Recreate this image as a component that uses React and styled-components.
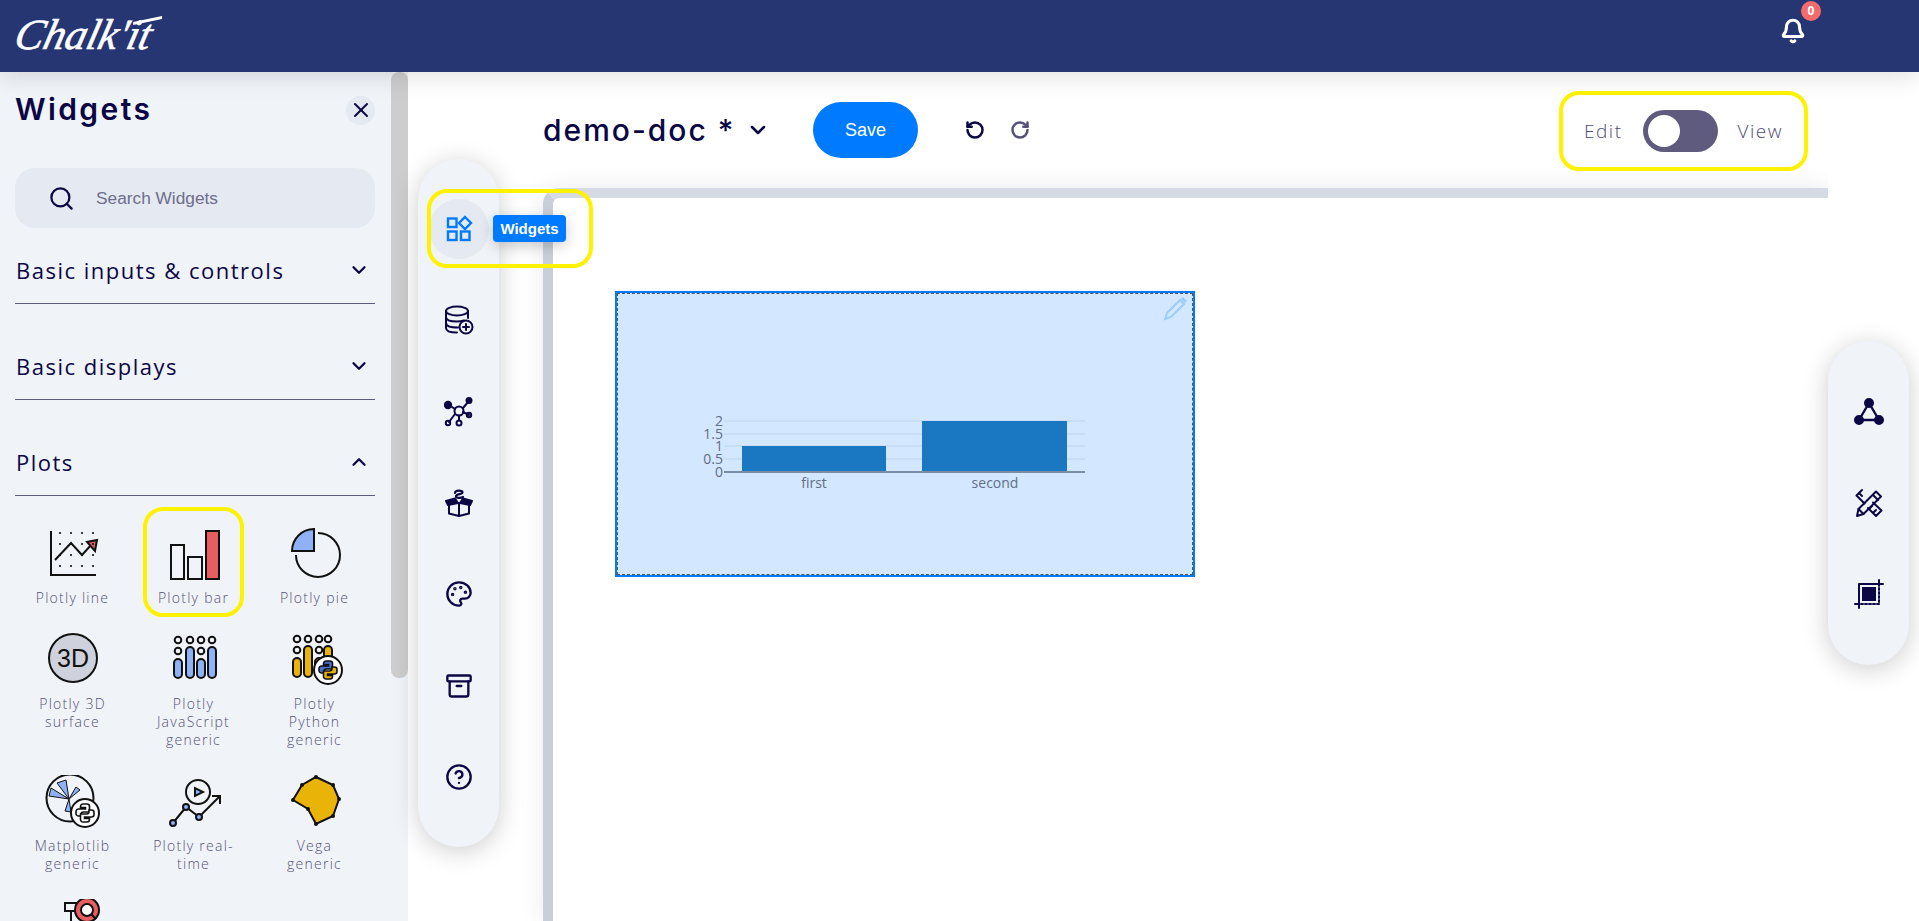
import styled, { createGlobalStyle } from 'styled-components';
import { Archive, Bell, ChevronDown, ChevronUp, CircleHelp, Palette, RotateCcw, RotateCw, Search, X } from 'lucide-react';

const INK = '#0b0745';
const BLUE = '#007bff';
const SOFT_BLUE = '#8fb1f5';
const GOLD = '#eab308';
const RED = '#e85d60';

const PythonMark = ({ x, y, top, bottom, scale = 1 }) => (
  <g transform={`translate(${x} ${y}) scale(${scale})`} stroke="#111" strokeWidth="1.6">
    <path fill={top} d="M-2 -9h4a2.500 2.500 0 0 1 2.500 2.500V-1h-6a2.500 2.500 0 0 0-2.500 2.500V3H-6.500A2.500 2.500 0 0 1-9 .5v-2A2.500 2.500 0 0 1-6.500-4H.5V-5.500h-5V-6.500A2.500 2.500 0 0 1-2-9z" />
    <path fill={bottom} d="M2 9h-4a2.500 2.500 0 0 1-2.500-2.500V1h6a2.500 2.500 0 0 0 2.500-2.500V-3H6.500A2.500 2.500 0 0 1 9-.5v2A2.500 2.500 0 0 1 6.500 4H-.5V5.500h5V6.500A2.500 2.500 0 0 1 2 9z" />
  </g>
);

const TileSvg = ({ children }) => (
  <svg width="60" height="62" viewBox="0 0 60 62" fill="none" stroke="#111" strokeWidth="2">
    {children}
  </svg>
);

const PlotlyLine = () => (
  <TileSvg>
    <path d="M8 4V48H53" />
    <path d="M12 33L28 16L39 28L49 17" />
    <path d="M54 13L44 15L52 24Z" fill={RED} />
    {[6, 17, 28, 39].map((y) =>
      [17, 28, 39, 50].map((x) => <circle key={`${x}-${y}`} cx={x} cy={y} r="1.100" fill="#111" stroke="none" />),
    )}
  </TileSvg>
);

const PlotlyBar = () => (
  <TileSvg>
    <rect x="7" y="18" width="13" height="34" />
    <rect x="24" y="30" width="14" height="22" />
    <rect x="42" y="4" width="13" height="48" fill={RED} />
  </TileSvg>
);

const PlotlyPie = () => (
  <TileSvg>
    <path d="M33 6A22 22 0 1 1 11 28" />
    <path d="M29 2V24H7A22 22 0 0 1 29 2Z" fill={SOFT_BLUE} />
  </TileSvg>
);

const Plotly3D = () => (
  <TileSvg>
    <circle cx="30" cy="25" r="24" fill="#cfd2dc" />
    <text x="30" y="34" textAnchor="middle" fontFamily="Liberation Sans, sans-serif" fontSize="25" fill="#111" stroke="none">3D</text>
  </TileSvg>
);

const DotBars = ({ fill, xs, offset }) => (
  <>
    {xs.map((x, i) => (
      <g key={x}>
        <circle cx={x} cy={7 - offset} r="3.300" />
        {i % 2 === 0 && <circle cx={x} cy={18 - offset} r="3.300" />}
        <rect
          x={x - 4}
          y={(i % 2 === 0 ? 26 : 14) - offset}
          width="8"
          height={i % 2 === 0 ? 19 : 31}
          rx="4"
          fill={fill}
        />
      </g>
    ))}
  </>
);

const PlotlyJs = () => (
  <TileSvg>
    <DotBars fill={SOFT_BLUE} xs={[14, 26, 37, 48]} offset={0} />
  </TileSvg>
);

const PlotlyPython = () => (
  <TileSvg>
    <DotBars fill={GOLD} xs={[12, 23, 34, 43]} offset={1} />
    <circle cx="43" cy="37" r="14" fill="#fff" />
    <PythonMark x={43} y={37} top="#4b6fd0" bottom={GOLD} />
  </TileSvg>
);

const Matplotlib = () => (
  <TileSvg>
    <circle cx="27" cy="23" r="23.500" />
    <g fill={SOFT_BLUE} strokeWidth="1">
      <path d="M26 24L14 8L23 5Z" />
      <path d="M26 24L6 21L8 13Z" />
      <path d="M26 24L33 12L37 15Z" />
      <path d="M26 24L22 36L28 37Z" />
    </g>
    <circle cx="42" cy="38" r="14" fill="#fff" />
    <PythonMark x={42} y={38} top="#fff" bottom="#fff" />
  </TileSvg>
);

const PlotlyRealtime = () => (
  <TileSvg>
    <circle cx="34" cy="17" r="12" />
    <path d="M31 13V21L39 17Z" fill={SOFT_BLUE} />
    <path d="M9 48L22 32L35 42L56 21M48 21H56V29" />
    {[[9, 48], [22, 32], [35, 42]].map(([x, y]) => (
      <circle key={x} cx={x} cy={y} r="3" fill={SOFT_BLUE} />
    ))}
  </TileSvg>
);

const VEGA_POINTS = [[31, 2], [48, 10], [54, 24], [48, 41], [31, 49], [23, 34], [8, 25], [17, 10]];

const Vega = () => (
  <TileSvg>
    <polygon points={VEGA_POINTS.map((p) => p.join(',')).join(' ')} fill={GOLD} />
    {VEGA_POINTS.map(([x, y]) => (
      <circle key={x + y} cx={x} cy={y} r="2" fill="#111" stroke="none" />
    ))}
  </TileSvg>
);

const Inspector = () => (
  <TileSvg>
    <path d="M34 4H22V12H34M28 12V30" />
    <circle cx="44" cy="11" r="12" fill={RED} />
    <circle cx="44" cy="11" r="6" fill="#fff" />
    <path d="M48 15L53 20" />
  </TileSvg>
);

const RailSvg = ({ children, color = INK, size = 30 }) => (
  <svg width={size} height={size} viewBox="0 0 30 30" fill="none" stroke={color} strokeWidth="2" strokeLinecap="round" strokeLinejoin="round">
    {children}
  </svg>
);

const WidgetsIcon = () => (
  <RailSvg color={BLUE}>
    <g strokeLinecap="butt" strokeLinejoin="miter" strokeWidth="2.400">
      <rect x="4" y="4.500" width="8.500" height="8.500" />
      <path d="M21 3L27 9L21 15L15 9Z" />
      <rect x="4" y="17.500" width="8.500" height="8.500" />
      <rect x="17" y="17.500" width="8.500" height="8.500" />
    </g>
  </RailSvg>
);

const DatabaseIcon = () => (
  <RailSvg>
    <ellipse cx="13" cy="6" rx="11" ry="4.500" />
    <path d="M2 6V23C2 26 7 27.500 13 27.500M24 6V13M2 12C2 15 7 16.500 13 16.500C16 16.500 18 16 20 15.500M2 18C2 21 7 22.500 14 22.500" />
    <circle cx="22" cy="22" r="6.500" fill="#f0f3f7" />
    <path d="M22 19V25M19 22H25" />
  </RailSvg>
);

const NetworkIcon = () => (
  <RailSvg>
    <circle cx="15" cy="14" r="4.500" />
    <path d="M11 12L5 8M19 11L25 4M19 15L25 18M11 17L5 25M15 18.500V23" />
    <circle cx="4" cy="8" r="3.200" fill={INK} />
    <circle cx="25" cy="3.500" r="2.500" fill={INK} />
    <circle cx="25" cy="18" r="2.200" />
    <circle cx="4" cy="26" r="2.200" />
    <circle cx="15" cy="26" r="2.500" />
  </RailSvg>
);

const PackageIcon = () => (
  <RailSvg>
    <path d="M5 15V25.500L15 28L25 25.500V15M15 15V28" />
    <path d="M2 13L11 10.500L14 15L4 17ZM28 13L19 10.500L16 15L26 17Z" fill={INK} />
    <path d="M11 5C11 2 19 2 18.500 4.500C18 7 12 5 12 8.500C12 10 17 10.500 19 9" strokeWidth="2.200" />
  </RailSvg>
);

const TriangleNodesIcon = () => (
  <RailSvg>
    <path d="M15 6L5 23H25Z" strokeWidth="2.400" />
    <circle cx="15" cy="6" r="4" fill={INK} />
    <circle cx="5" cy="23" r="4" fill={INK} />
    <circle cx="25" cy="23" r="4" fill={INK} />
  </RailSvg>
);

const DesignToolsIcon = () => (
  <RailSvg>
    <path d="M3 28L4.500 21L22 3.500L27 8.500L9.500 26Z" />
    <path d="M4.500 21L9.500 26M19 7L24 12" />
    <path d="M8 2L2.500 7.500L10.500 15.500M19 14.500L27.500 22.500L22 28L14 20M6 6L8 8M16 20L18 18M20 24L22 22" />
  </RailSvg>
);

const CropSquareIcon = () => (
  <RailSvg>
    <path d="M4 25H1M5 29V25" />
    <path d="M5 25V5H25" />
    <path d="M25 1V5H29" />
    <path d="M25 5V25H5" strokeDasharray="2 2" />
    <rect x="8" y="8" width="14" height="14" fill={INK} stroke="none" />
  </RailSvg>
);

const RAIL_ITEMS = [
  { key: 'widgets', icon: <WidgetsIcon />, active: true },
  { key: 'data', icon: <DatabaseIcon /> },
  { key: 'graph', icon: <NetworkIcon /> },
  { key: 'packages', icon: <PackageIcon /> },
  { key: 'theme', icon: <Palette size={28} color={INK} strokeWidth={2} /> },
  { key: 'archive', icon: <Archive size={28} color={INK} strokeWidth={2} /> },
  { key: 'help', icon: <CircleHelp size={28} color={INK} strokeWidth={2} /> },
];

const TILES = [
  { name: 'Plotly line', icon: <PlotlyLine /> },
  { name: 'Plotly bar', icon: <PlotlyBar />, marked: true },
  { name: 'Plotly pie', icon: <PlotlyPie /> },
  { name: 'Plotly 3D surface', icon: <Plotly3D /> },
  { name: 'Plotly JavaScript generic', icon: <PlotlyJs /> },
  { name: 'Plotly Python generic', icon: <PlotlyPython /> },
  { name: 'Matplotlib generic', icon: <Matplotlib /> },
  { name: 'Plotly real-time', icon: <PlotlyRealtime /> },
  { name: 'Vega generic', icon: <Vega /> },
  { name: '', icon: <Inspector /> },
];

const TICKS = [
  { label: '2', y: 421 },
  { label: '1.5', y: 434 },
  { label: '1', y: 446 },
  { label: '0.5', y: 459 },
  { label: '0', y: 472 },
];

const BarChart = () => (
  <ChartSvg width="576" height="282" viewBox="617 293 576 282">
    {TICKS.slice(0, 4).map((t) => (
      <line key={t.label} x1="724" x2="1085" y1={t.y} y2={t.y} stroke="#bdd3ee" />
    ))}
    <rect x="742" y="446" width="144" height="26" fill="#1a78c2" />
    <rect x="922" y="421" width="145" height="51" fill="#1a78c2" />
    <line x1="724" x2="1085" y1="472" y2="472" stroke="#7c8ea5" strokeWidth="2" />
    {TICKS.map((t) => (
      <TickText key={t.label} x="723" y={t.y + 5} textAnchor="end">{t.label}</TickText>
    ))}
    <BarText x="814" y="488" textAnchor="middle">first</BarText>
    <BarText x="995" y="488" textAnchor="middle">second</BarText>
  </ChartSvg>
);

const App = () => {
  return (
    <Page>
      <GlobalStyle />
      <TopHeader>
        <Logo>Chalk'it</Logo>
        <BellButton>
          <Bell size={26} color="#fff" strokeWidth={2.800} />
          <Badge>0</Badge>
        </BellButton>
      </TopHeader>
      <Body>
        <Sidebar>
          <SidebarContent>
            <TitleRow>
              <SidebarTitle>Widgets</SidebarTitle>
              <CloseButton><X size={24} color={INK} strokeWidth={2} /></CloseButton>
            </TitleRow>
            <SearchBox>
              <Search size={27} color={INK} strokeWidth={2} />
              <SearchInput placeholder="Search Widgets" />
            </SearchBox>
            <Sections>
              <SectionHeader>Basic inputs &amp; controls<ChevronDown size={22} color={INK} strokeWidth={2.500} /></SectionHeader>
              <SectionHeader>Basic displays<ChevronDown size={22} color={INK} strokeWidth={2.500} /></SectionHeader>
              <SectionHeader>Plots<ChevronUp size={22} color={INK} strokeWidth={2.500} /></SectionHeader>
            </Sections>
            <TileGrid>
              {TILES.map((tile, i) => (
                <Tile key={i} $marked={tile.marked}>
                  {tile.icon}
                  <TileName>{tile.name}</TileName>
                </Tile>
              ))}
            </TileGrid>
          </SidebarContent>
          <ScrollThumb />
        </Sidebar>
        <LeftRail>
          {RAIL_ITEMS.map((item) => (
            <RailItem key={item.key} $active={item.active}>{item.icon}</RailItem>
          ))}
          <RailMark />
          <RailTooltip>Widgets</RailTooltip>
        </LeftRail>
        <Workspace>
          <DocBar>
            <DocName>demo-doc *</DocName>
            <DocChevron><ChevronDown size={24} color={INK} strokeWidth={2.500} /></DocChevron>
            <SaveButton>Save</SaveButton>
            <HistoryButton><RotateCcw size={20} color={INK} strokeWidth={3} /></HistoryButton>
            <HistoryButton><RotateCw size={20} color="#55527a" strokeWidth={3} /></HistoryButton>
            <ModeToggle>
              <ModeLabel>Edit</ModeLabel>
              <Switch><Knob /></Switch>
              <ModeLabel>View</ModeLabel>
            </ModeToggle>
          </DocBar>
          <Canvas>
            <WidgetCard>
              <EditPencil>
                <svg width="24" height="24" viewBox="0 0 24 24" fill="none" stroke="#99ccff" strokeWidth="2">
                  <path d="M2 22L4 16L17 3L21 7L8 20Z" />
                  <path d="M19 1L23 5" strokeWidth="3" />
                </svg>
              </EditPencil>
              <BarChart />
            </WidgetCard>
          </Canvas>
        </Workspace>
        <RightRail>
          <RailItem><TriangleNodesIcon /></RailItem>
          <RailItem><DesignToolsIcon /></RailItem>
          <RailItem><CropSquareIcon /></RailItem>
        </RightRail>
      </Body>
    </Page>
  );
};

const GlobalStyle = createGlobalStyle`
  html, body {
    margin: 0;
    height: 100%;
    background: #fff;
    font-family: 'Open Sans', 'Liberation Sans', sans-serif;
  }
  * {
    box-sizing: border-box;
  }
`;

const Page = styled.div`
  display: flex;
  flex-direction: column;
  height: 100vh;
  overflow: hidden;
`;

const TopHeader = styled.header`
  display: flex;
  align-items: center;
  justify-content: space-between;
  flex: none;
  height: 72px;
  padding: 0 113px 0 15px;
  background: #263673;
  position: relative;
  z-index: 3;
  box-shadow: 0 4px 24px rgba(0, 0, 0, 0.13);
`;

const Logo = styled.div`
  color: #fff;
  font-family: 'Liberation Serif', serif;
  font-style: italic;
  font-size: 43px;
  letter-spacing: 0;
  transform: skewX(-14deg);
  transform-origin: left bottom;
  position: relative;
  top: -2px;
  left: -5px;
  -webkit-text-stroke: 0.6px #fff;
  &::after {
    content: '';
    position: absolute;
    right: -6px;
    top: 9px;
    width: 28px;
    height: 3px;
    background: #fff;
    transform: rotate(-12deg);
  }
`;

const BellButton = styled.div`
  position: relative;
  display: flex;
  width: 26px;
  height: 26px;
  margin-top: -10px;
`;

const Badge = styled.span`
  position: absolute;
  left: 21px;
  top: -17px;
  width: 20px;
  height: 20px;
  border-radius: 50%;
  background: #f56b6b;
  color: #fff;
  font-size: 12px;
  font-weight: 700;
  line-height: 20px;
  text-align: center;
`;

const Body = styled.div`
  display: flex;
  flex: 1;
  min-height: 0;
`;

const Sidebar = styled.aside`
  display: flex;
  flex: none;
  width: 408px;
  background: #f0f3f7;
  overflow: hidden;
`;

const SidebarContent = styled.div`
  flex: none;
  width: 391px;
  padding: 0 16px 0 15px;
`;

const ScrollThumb = styled.div`
  flex: none;
  width: 17px;
  height: 606px;
  border-radius: 8px;
  background: #cdcdcd;
`;

const TitleRow = styled.div`
  display: flex;
  align-items: center;
  justify-content: space-between;
  height: 36px;
  margin-top: 20px;
`;

const SidebarTitle = styled.h2`
  margin: -2px 0 0;
  color: ${INK};
  font-family: Inter, sans-serif;
  font-size: 30px;
  font-weight: 600;
  letter-spacing: 2.400px;
`;

const CloseButton = styled.div`
  display: flex;
  align-items: center;
  justify-content: center;
  width: 29px;
  height: 29px;
  border-radius: 50%;
  background: #e5e9f1;
`;

const SearchBox = styled.div`
  display: flex;
  align-items: center;
  gap: 21px;
  height: 60px;
  margin-top: 40px;
  padding: 1px 0 0 33px;
  border-radius: 20px;
  background: #e5e9f1;
`;

const SearchInput = styled.input`
  flex: 1;
  min-width: 0;
  padding: 0;
  border: none;
  outline: none;
  background: none;
  font-family: 'Liberation Sans', sans-serif;
  font-size: 17.300px;
  &::placeholder {
    color: #6e6e8c;
    opacity: 1;
  }
`;

const Sections = styled.div`
  display: flex;
  flex-direction: column;
  gap: 31px;
  margin-top: 11px;
`;

const SectionHeader = styled.div`
  display: flex;
  align-items: center;
  justify-content: space-between;
  height: 65px;
  padding: 0 5px 2px 1px;
  border-bottom: 1px solid #5f5b7f;
  color: ${INK};
  font-size: 22px;
  letter-spacing: 1.500px;
`;

const TileGrid = styled.div`
  display: grid;
  grid-template-columns: repeat(3, 1fr);
  row-gap: 26px;
  margin: 31px 0 0 -3px;
`;

const Tile = styled.div`
  position: relative;
  display: flex;
  flex-direction: column;
  align-items: center;
  ${({ $marked }) =>
    $marked &&
    `
    &::after {
      content: '';
      position: absolute;
      left: 10px;
      right: 10px;
      top: -20px;
      bottom: -10px;
      border: 4px solid #fff200;
      border-radius: 20px;
    }
  `}
`;

const TileName = styled.span`
  width: 92px;
  color: #55527a;
  font-size: 14px;
  font-weight: 300;
  line-height: 18px;
  letter-spacing: 1.250px;
  text-align: center;
`;

const LeftRail = styled.nav`
  position: relative;
  z-index: 2;
  display: flex;
  flex: none;
  flex-direction: column;
  align-items: center;
  justify-content: center;
  gap: 31.300px;
  width: 81px;
  height: 688px;
  margin: 87px 0 0 10px;
  border-radius: 41px;
  background: #f0f3f7;
  box-shadow: 0 4px 26px rgba(0, 0, 0, 0.2);
`;

const RightRail = styled(LeftRail)`
  height: 324px;
  margin: 269px 0 0 0;
`;

const RailItem = styled.div`
  display: flex;
  align-items: center;
  justify-content: center;
  width: 60px;
  height: 60px;
  border-radius: 50%;
  background: ${({ $active }) => ($active ? '#e5e9f1' : 'transparent')};
`;

const RailMark = styled.div`
  position: absolute;
  left: 9px;
  top: 30px;
  width: 166px;
  height: 79px;
  border: 4px solid #fff200;
  border-radius: 20px;
`;

const RailTooltip = styled.div`
  position: absolute;
  left: 75px;
  top: 56px;
  width: 73px;
  height: 27px;
  border-radius: 4px;
  background: ${BLUE};
  box-shadow: 0 4px 14px rgba(0, 0, 0, 0.2);
  color: #fff;
  font-family: 'Liberation Sans', sans-serif;
  font-size: 15px;
  font-weight: 700;
  line-height: 28px;
  text-align: center;
`;

const Workspace = styled.main`
  display: flex;
  flex: none;
  flex-direction: column;
  width: 1315px;
  margin-left: 14px;
  padding-left: 30px;
  overflow: hidden;
`;

const DocBar = styled.div`
  display: flex;
  flex: none;
  align-items: center;
  height: 116px;
  padding-right: 20px;
`;

const DocName = styled.h1`
  margin: 0;
  flex: none;
  width: 190px;
  color: ${INK};
  font-family: Inter, sans-serif;
  font-size: 30px;
  font-weight: 500;
  letter-spacing: 2px;
  white-space: nowrap;
`;

const DocChevron = styled.div`
  display: flex;
  margin-left: 13px;
`;

const SaveButton = styled.button`
  flex: none;
  width: 105px;
  height: 56px;
  margin: 0 47px 0 43px;
  border: none;
  border-radius: 28px;
  background: ${BLUE};
  color: #fff;
  font-family: 'Liberation Sans', sans-serif;
  font-size: 18px;
`;

const HistoryButton = styled.div`
  display: flex;
  margin-right: 25px;
`;

const ModeToggle = styled.div`
  display: flex;
  align-items: center;
  justify-content: center;
  gap: 20px;
  width: 249px;
  height: 80px;
  margin: 2px 0 0 auto;
  border: 4px solid #fff200;
  border-radius: 20px;
`;

const ModeLabel = styled.span`
  color: #4f4b75;
  font-size: 19px;
  font-weight: 300;
  letter-spacing: 1.500px;
`;

const Switch = styled.div`
  display: flex;
  align-items: center;
  width: 75px;
  height: 42px;
  padding-left: 5px;
  border-radius: 21px;
  background: #5f5b7f;
`;

const Knob = styled.div`
  width: 32px;
  height: 32px;
  border-radius: 50%;
  background: #fff;
`;

const Canvas = styled.section`
  flex: 1;
  padding: 93px 0 0 62px;
  border-top: 10px solid #d5dae4;
  border-left: 10px solid #c9ced8;
  border-top-left-radius: 16px;
  background: #fff;
  box-shadow: 0 0 26px rgba(0, 0, 0, 0.09);
`;

const WidgetCard = styled.div`
  position: relative;
  width: 580px;
  height: 286px;
  border: 2px solid ${BLUE};
  outline: 1px dashed #555;
  outline-offset: -3px;
  background: #d3e7fe;
`;

const EditPencil = styled.div`
  position: absolute;
  right: 6px;
  top: 4px;
  display: flex;
`;

const ChartSvg = styled.svg`
  display: block;
`;

const TickText = styled.text`
  fill: #5f6f87;
  font-family: 'Open Sans', sans-serif;
  font-size: 14px;
`;

const BarText = styled.text`
  fill: #5f6f87;
  font-family: 'Open Sans', sans-serif;
  font-size: 14px;
`;

export default App;
